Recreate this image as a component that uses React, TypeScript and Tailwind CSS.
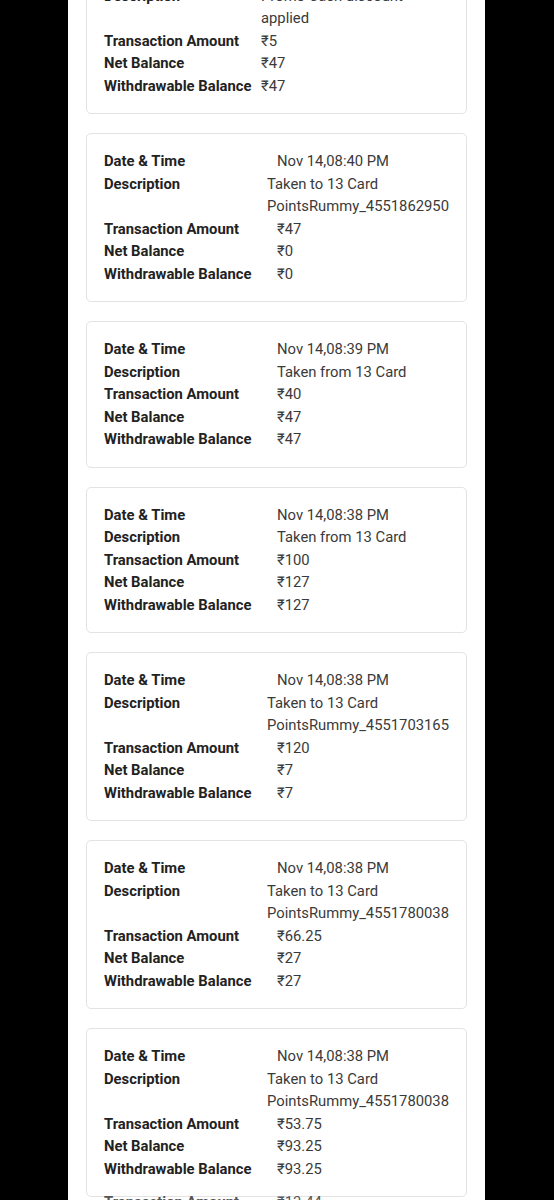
import React from 'react';

type Txn = {
    date: string;
    desc: string[];
    amount: string;
    net: string;
    withdrawable: string;
    col: string;
    descShift?: boolean;
};

const txns: Txn[] = [
    { date: 'Nov 14,08:41 PM', desc: ['Promo Cash discount', 'applied'], amount: '₹5', net: '₹47', withdrawable: '₹47', col: 'grid-cols-[157px_1fr]' },
    { date: 'Nov 14,08:40 PM', desc: ['Taken to 13 Card', 'PointsRummy_4551862950'], amount: '₹47', net: '₹0', withdrawable: '₹0', col: 'grid-cols-[173px_1fr]', descShift: true },
    { date: 'Nov 14,08:39 PM', desc: ['Taken from 13 Card'], amount: '₹40', net: '₹47', withdrawable: '₹47', col: 'grid-cols-[173px_1fr]' },
    { date: 'Nov 14,08:38 PM', desc: ['Taken from 13 Card'], amount: '₹100', net: '₹127', withdrawable: '₹127', col: 'grid-cols-[173px_1fr]' },
    { date: 'Nov 14,08:38 PM', desc: ['Taken to 13 Card', 'PointsRummy_4551703165'], amount: '₹120', net: '₹7', withdrawable: '₹7', col: 'grid-cols-[173px_1fr]', descShift: true },
    { date: 'Nov 14,08:38 PM', desc: ['Taken to 13 Card', 'PointsRummy_4551780038'], amount: '₹66.25', net: '₹27', withdrawable: '₹27', col: 'grid-cols-[173px_1fr]', descShift: true },
    { date: 'Nov 14,08:38 PM', desc: ['Taken to 13 Card', 'PointsRummy_4551780038'], amount: '₹53.75', net: '₹93.25', withdrawable: '₹93.25', col: 'grid-cols-[173px_1fr]', descShift: true },
];

const TxnCard: React.FC<{ txn: Txn }> = ({ txn }) => (
    <div className="border border-[#e3e3e3] rounded-[5px] bg-white px-[17px] py-[16px]">
        <div className={`grid ${txn.col} leading-[22.5px] text-[14.8px]`}>
            <div className="font-bold">Date &amp; Time</div>
            <div className="text-[#3a3a3a]">{txn.date}</div>
            <div className="font-bold">Description</div>
            <div className={`text-[#3a3a3a] ${txn.descShift ? '-ml-[10px]' : ''}`}>
                {txn.desc.map((line, i) => <div key={i} className="whitespace-nowrap">{line}</div>)}
            </div>
            <div className="font-bold">Transaction Amount</div>
            <div className="text-[#3a3a3a]">{txn.amount}</div>
            <div className="font-bold">Net Balance</div>
            <div className="text-[#3a3a3a]">{txn.net}</div>
            <div className="font-bold">Withdrawable Balance</div>
            <div className="text-[#3a3a3a]">{txn.withdrawable}</div>
        </div>
    </div>
);

export default function App() {
    return (
        <div className="h-[1200px] overflow-hidden bg-black font-['Roboto',sans-serif] text-[#222]">
            <div className="mx-[68px] w-[417px] h-full bg-white px-[18px] flex flex-col overflow-hidden">
                <div className="-mt-[55px] flex flex-col gap-[19px] shrink-0">
                    {txns.map((t, i) => <TxnCard key={i} txn={t} />)}
                </div>
                {/* next row peeking in under the last card */}
                <div className="-mt-[6px] shrink-0 px-[18px] grid grid-cols-[173px_1fr] text-[14.8px] leading-[22.5px] text-[#555]">
                    <div className="font-bold">Transaction Amount</div>
                    <div>₹13.44</div>
                </div>
            </div>
        </div>
    );
}
